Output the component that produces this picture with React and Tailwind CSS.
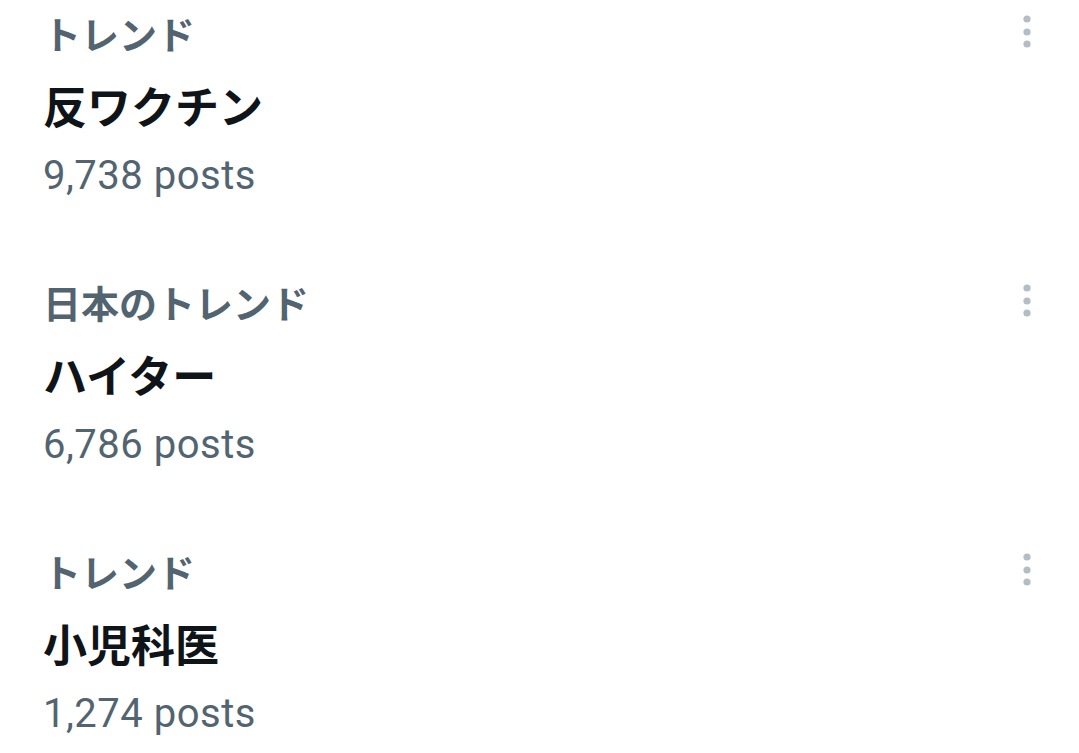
const trends = [
  { category: 'トレンド', title: '反ワクチン', posts: '9,738 posts' },
  { category: '日本のトレンド', title: 'ハイター', posts: '6,786 posts' },
  { category: 'トレンド', title: '小児科医', posts: '1,274 posts' },
]

function MoreDots() {
  return (
    <svg width="14" height="40" viewBox="0 0 14 40" className="text-[#b3bdc5]">
      <circle cx="7" cy="7" r="3.6" fill="currentColor" />
      <circle cx="7" cy="20" r="3.6" fill="currentColor" />
      <circle cx="7" cy="32" r="3.6" fill="currentColor" />
    </svg>
  )
}

export default function App() {
  return (
    <div
      className="w-[1079px] h-[753px] bg-white overflow-hidden pt-[12px]"
      style={{ fontFamily: "Roboto, 'Noto Sans CJK JP', sans-serif" }}
    >
      {trends.map((t, i) => (
        <div key={i} className="flex items-start justify-between pl-[43px] pr-[45px] pb-[81px]">
          <div className="flex flex-col">
            <div className="text-[38px] leading-[48px] font-bold text-[#536471]">{t.category}</div>
            <div className="mt-[21px] text-[44px] leading-[56px] font-bold text-[#0f1419]">{t.title}</div>
            <div className="mt-[15px] text-[40px] leading-[48px] tracking-[0.5px] text-[#536471]">{t.posts}</div>
          </div>
          <div>
            <MoreDots />
          </div>
        </div>
      ))}
    </div>
  )
}
